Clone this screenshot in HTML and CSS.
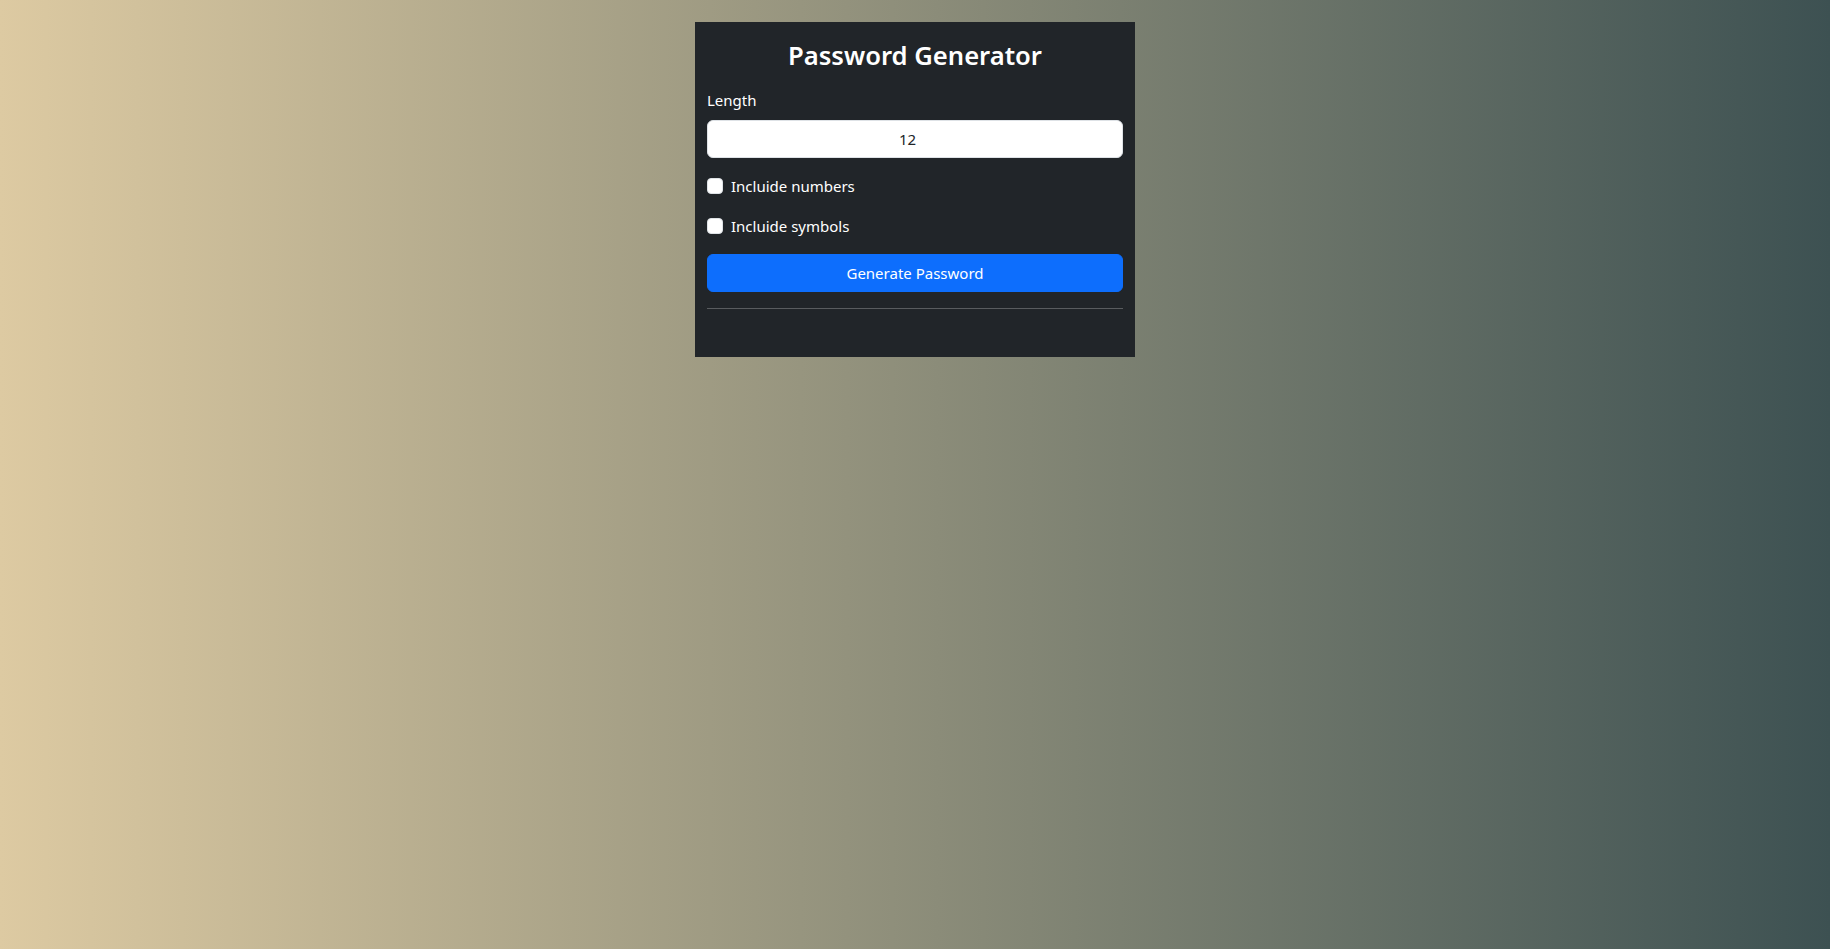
FILE: index.html
```html
<!DOCTYPE html>
<html lang="en">
<head>
<meta charset="utf-8">
<title>Password Generator</title>
<link rel="stylesheet" href="styles.css">
</head>
<body>
<main class="page">
  <section class="card">
    <h2 class="title">Password Generator</h2>
    <label class="form-label" for="length">Length</label>
    <input class="form-control" id="length" type="number" value="12">
    <div class="form-check">
      <input class="check" type="checkbox" id="numbers">
      <label for="numbers">Incluide numbers</label>
    </div>
    <div class="form-check">
      <input class="check" type="checkbox" id="symbols">
      <label for="symbols">Incluide symbols</label>
    </div>
    <button class="btn" type="button">Generate Password</button>
    <hr class="divider">
    <div class="output"></div>
  </section>
</main>
</body>
</html>
```

FILE: styles.css
```css
* { box-sizing: border-box; }
html, body { margin: 0; height: 100%; }
body {
  font-family: "Noto Sans", "Open Sans", sans-serif;
  font-size: 16px;
  line-height: 24px;
  color: #fff;
  background: linear-gradient(to right, #ddcaa2, #3d5152);
}
.page {
  display: flex;
  justify-content: center;
  padding-top: 22px;
}
.card {
  width: 440px;
  background: #212529;
  padding: 12px 12px;
  display: flex;
  flex-direction: column;
}
.title {
  margin: 0 0 10px;
  font-size: 25.6px;
  line-height: 44px;
  font-weight: 600;
  text-align: center;
}
.form-label {
  display: block;
  margin-bottom: 8px;
  font-size: 15px;
}
.form-control {
  display: block;
  width: 100%;
  height: 38px;
  margin: 0 0 16px;
  padding: 6px 12px;
  font-family: inherit;
  font-size: 15px;
  color: #212529;
  text-align: center;
  background: #fff;
  border: 1px solid #dee2e6;
  border-radius: 6px;
}
.form-check {
  display: flex;
  align-items: flex-start;
  gap: 8px;
  margin-bottom: 16px;
  font-size: 15px;
}
.check {
  appearance: none;
  -webkit-appearance: none;
  width: 16px;
  height: 16px;
  margin: 4px 0 0;
  background: #fff;
  border: 1px solid #dee2e6;
  border-radius: 4px;
  flex: none;
}
.btn {
  height: 38px;
  width: 100%;
  background: #0d6efd;
  color: #fff;
  border: 1px solid #0d6efd;
  border-radius: 6px;
  font-family: inherit;
  font-size: 15px;
}
.divider {
  margin: 16px 0;
  border: 0;
  border-top: 1px solid #595c5f;
  height: 0;
}
.output {
  min-height: 20px;
}
```
